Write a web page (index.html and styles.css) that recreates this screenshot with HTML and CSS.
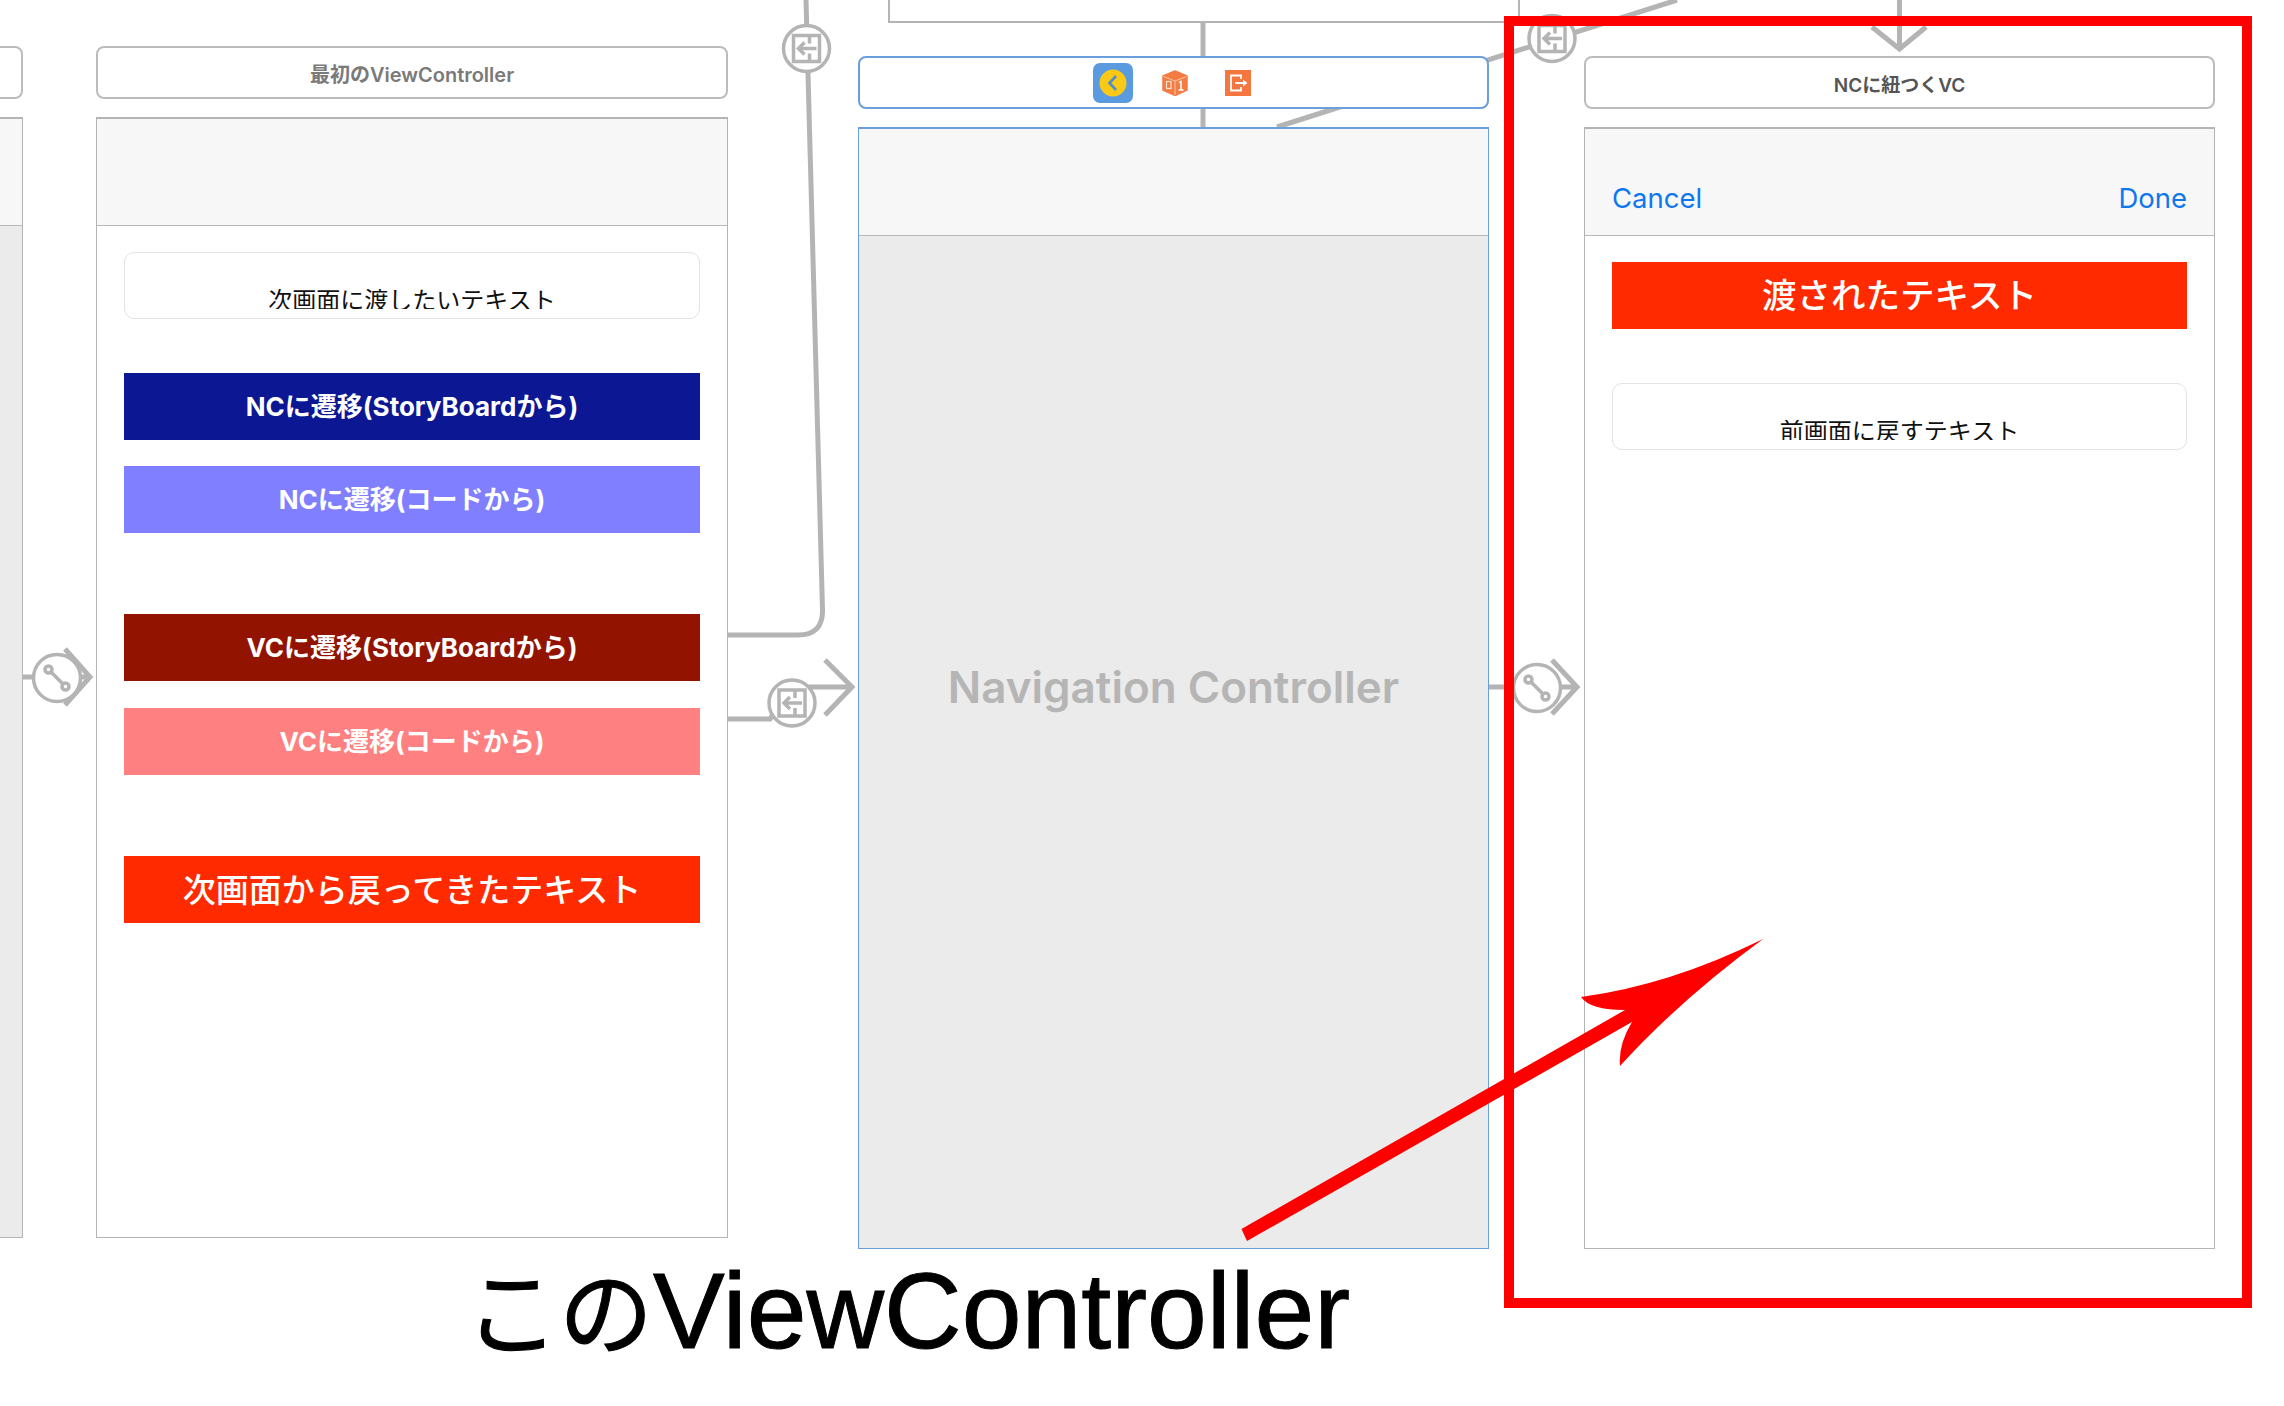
FILE: index.html
```
<!DOCTYPE html>
<html>
<head>
    <meta charset="utf-8">
    <meta name="viewport" content="width=device-width, initial-scale=1">
    <title>storyboard</title>
    <link rel="stylesheet" href="styles.css">
</head>
<body>
    <div class="board">
        <!-- segue lines, they run behind the scenes -->
        <svg class="layer" width="2284" height="1406" viewBox="0 0 2284 1406">
            <g class="wire">
                <path d="M806 0 L822.5 610 Q823 635 798 635 L727 635"/>
                <path d="M727 719 L770 719 L790 687 L851 687"/>
                <path d="M825 660 L852 687 L825 715"/>
                <path d="M23 677 L89 677"/>
                <path d="M65 649 L90 677 L65 705"/>
                <path d="M1203 22 L1203 127"/>
                <path d="M1277 127 L1677 0"/>
                <path d="M1489 687 L1577 687"/>
                <path d="M1552 660 L1577 687 L1552 714"/>
                <path d="M1899.5 0 L1899.5 49"/>
                <path d="M1872 27 L1899.5 49 L1926 27"/>
            </g>
        </svg>

        <div class="top-scene"></div>

        <div class="scene scene-prev">
            <div class="scene-title"></div>
            <div class="scene-body grey-body">
                <div class="navbar"></div>
            </div>
        </div>

        <div class="scene scene-first">
            <div class="scene-title">最初のViewController</div>
            <div class="scene-body">
                <div class="navbar"></div>
                <div class="content">
                    <div class="field"><span class="field-text">次画面に渡したいテキスト</span></div>
                    <div class="btn btn-navy">NCに遷移(StoryBoardから)</div>
                    <div class="btn btn-periwinkle">NCに遷移(コードから)</div>
                    <div class="btn btn-maroon group-gap">VCに遷移(StoryBoardから)</div>
                    <div class="btn btn-salmon">VCに遷移(コードから)</div>
                    <div class="label label-red group-gap">次画面から戻ってきたテキスト</div>
                </div>
            </div>
        </div>

        <div class="scene scene-nav">
            <div class="scene-title title-icons">
                <svg class="dock-icon" width="40" height="40" viewBox="0 0 40 40">
                    <rect width="40" height="40" rx="7" fill="#5a9be0"/>
                    <circle cx="20" cy="20" r="13.5" fill="#f9c915"/>
                    <path d="M23 13 L16.5 20 L23 27" fill="none" stroke="#4f8fc9" stroke-width="2.6"/>
                </svg>
                <svg class="dock-icon cube" width="26" height="26" viewBox="0 0 26 26">
                    <path d="M13 1 L25 6 L25 20 L13 25.5 L1 20 L1 6 Z" fill="#f47b42" stroke="#f47b42" stroke-width="1.5" stroke-linejoin="round"/>
                    <path d="M1.5 6.5 L13 11 L24.5 6.5 M13 11 L13 25" fill="none" stroke="#fbc6a8" stroke-width="1"/>
                    <rect x="4.5" y="11.5" width="4.5" height="7" fill="none" stroke="#fde3d3" stroke-width="1.2"/>
                    <path d="M17 12.5 L19 11.5 L19 20 M16.5 20 L21.5 20" fill="none" stroke="#fff" stroke-width="1.6"/>
                </svg>
                <svg class="dock-icon" width="26" height="26" viewBox="0 0 26 26">
                    <rect width="26" height="26" fill="#f5763f"/>
                    <path d="M16 9 L16 5.5 L6 5.5 L6 20.5 L16 20.5 L16 17" fill="none" stroke="#fff" stroke-width="1.8"/>
                    <path d="M10 13 L19 13" stroke="#fff" stroke-width="2"/>
                    <path d="M18 9.5 L22.5 13 L18 16.5 Z" fill="#fff"/>
                </svg>
            </div>
            <div class="scene-body grey-body">
                <div class="navbar"></div>
                <div class="nav-caption">Navigation Controller</div>
            </div>
        </div>

        <div class="scene scene-child">
            <div class="scene-title title-dark">NCに紐つくVC</div>
            <div class="scene-body">
                <div class="navbar navbar-items">
                    <span class="bar-item">Cancel</span>
                    <span class="bar-item">Done</span>
                </div>
                <div class="content">
                    <div class="label label-red label-big">渡されたテキスト</div>
                    <div class="field field-below"><span class="field-text">前画面に戻すテキスト</span></div>
                </div>
            </div>
        </div>

        <!-- segue badges sit on top of the lines and the scene edges -->
        <svg class="layer" width="2284" height="1406" viewBox="0 0 2284 1406">
            <defs>
                <g id="seg-door">
                    <circle r="23" class="badge"/>
                    <rect x="-13" y="-13" width="26" height="26" class="badge-line"/>
                    <path d="M3 -13 L3 -5 M3 5 L3 13 M10 0 L-8 0 M-2 -6 L-8 0 L-2 6" class="badge-line"/>
                </g>
                <g id="seg-link">
                    <circle r="23.5" class="badge"/>
                    <path d="M-5.5 -5.5 L5.5 5.5" class="badge-line"/>
                    <circle cx="-8.5" cy="-8.5" r="3.5" class="badge-line"/>
                    <circle cx="8.5" cy="8.5" r="3.5" class="badge-line"/>
                </g>
            </defs>
            <use href="#seg-door" x="806.5" y="48.5"/>
            <use href="#seg-door" x="792" y="703"/>
            <use href="#seg-door" x="1552" y="38.5"/>
            <use href="#seg-link" x="57" y="678"/>
            <use href="#seg-link" x="1537" y="688"/>
        </svg>

        <div class="frame"></div>

        <svg class="layer" width="2284" height="1406" viewBox="0 0 2284 1406">
            <path fill="#ff0000" d="M1241.5 1229 L1625 1010 Q1590 1010 1581 997 Q1670 985 1763 939 Q1680 1000 1620 1066 Q1618 1045 1632 1022 L1247 1241 Z"/>
        </svg>

        <div class="caption"><span class="caption-kana">この</span>ViewController</div>
    </div>
</body>
</html>
```
FILE: styles.css
```
*
{
    margin: 0px;
    padding: 0px;
    box-sizing: border-box;
}
body
{
    background-color: white;
    font-family: "Inter", "Noto Sans CJK JP", sans-serif;
}
.board
{
    position: relative;
    width: 2284px;
    height: 1406px;
    overflow: hidden;
}
.layer
{
    position: absolute;
    top: 0px;
    left: 0px;
}
.wire path
{
    fill: none;
    stroke: #b4b4b4;
    stroke-width: 5;
}
.badge
{
    fill: white;
    stroke: #b4b4b4;
    stroke-width: 3.5;
}
.badge-line
{
    fill: none;
    stroke: #b4b4b4;
    stroke-width: 3.5;
}
.top-scene
{
    position: absolute;
    left: 888px;
    top: -10px;
    width: 632px;
    height: 33px;
    background-color: white;
    border: 2px solid #b4b4b4;
}

/* scenes */
.scene
{
    position: absolute;
    display: flex;
    flex-direction: column;
    gap: 18px;
    width: 632px;
}
.scene-prev
{
    left: -609px;
    top: 46px;
    height: 1192px;
}
.scene-first
{
    left: 96px;
    top: 46px;
    height: 1192px;
}
.scene-nav
{
    left: 858px;
    top: 56px;
    width: 631px;
    height: 1193px;
    --edge: #6b9fdb;
}
.scene-child
{
    left: 1584px;
    top: 56px;
    width: 631px;
    height: 1193px;
}
.scene-title
{
    display: flex;
    align-items: center;
    justify-content: center;
    height: 53px;
    flex: none;
    padding-top: 2px;
    background-color: white;
    border: 2px solid var(--edge, #bcbcbc);
    border-radius: 8px;
    color: #7a7a7a;
    font-size: 20px;
    font-weight: 600;
}
.title-dark
{
    color: #555;
    font-size: 19px;
}
.title-icons
{
    padding-top: 0px;
    padding-right: 3px;
}
.dock-icon
{
    display: block;
}
.cube
{
    margin-left: 29px;
    margin-right: 37px;
}
.scene-body
{
    position: relative;
    flex: 1;
    background-color: white;
    border: 1px solid var(--edge, #b4b4b4);
    border-top-width: 2px;
}
.grey-body
{
    background-color: #ebebeb;
}
.navbar
{
    height: 107px;
    background-color: #f7f7f7;
    border-bottom: 1px solid #b9b9b9;
}
.navbar-items
{
    display: flex;
    align-items: flex-end;
    justify-content: space-between;
    padding: 0px 27px 20px 27px;
}
.bar-item
{
    color: #0f77ee;
    font-size: 27.5px;
    line-height: 34px;
}
.nav-caption
{
    position: absolute;
    left: 0px;
    right: 0px;
    top: 532px;
    text-align: center;
    color: #b5b5b5;
    font-size: 44px;
    font-weight: 600;
    line-height: 52px;
}

/* scene content */
.content
{
    display: flex;
    flex-direction: column;
    gap: 26px;
    padding: 26px 27px 0px 27px;
}
.field
{
    height: 67px;
    background-color: white;
    border: 1px solid #e3e3e3;
    border-radius: 10px;
    text-align: center;
    color: #111;
    font-size: 24px;
    padding-top: 36px;
    margin-bottom: 28px;
}
.field-below
{
    margin-top: 28px;
    margin-bottom: 0px;
}
.field-text
{
    display: block;
    height: 20px;
    line-height: 24px;
    overflow: hidden;
}
.btn
{
    display: flex;
    align-items: center;
    justify-content: center;
    height: 67px;
    padding-bottom: 4px;
    color: white;
    font-size: 26px;
    font-weight: 700;
}
.btn-navy
{
    background-color: #0c1793;
}
.btn-periwinkle
{
    background-color: #7f7fff;
}
.btn-maroon
{
    background-color: #921400;
}
.btn-salmon
{
    margin-top: 1px;
    background-color: #ff8080;
}
.group-gap
{
    margin-top: 55px;
}
.label
{
    display: flex;
    align-items: center;
    justify-content: center;
    height: 67px;
    color: white;
    font-size: 33px;
    font-weight: 500;
    padding-bottom: 4px;
}
.label-red
{
    background-color: #ff2a00;
}
.label-big
{
    font-size: 34.5px;
    padding-bottom: 5px;
}

/* annotation */
.frame
{
    position: absolute;
    left: 1504px;
    top: 16px;
    width: 748px;
    height: 1292px;
    border: 10px solid #ff0000;
}
.caption
{
    position: absolute;
    left: 465px;
    top: 1247px;
    color: black;
    font-family: "Liberation Sans", sans-serif;
    font-size: 107.5px;
    line-height: 120px;
    white-space: nowrap;
    -webkit-text-stroke: 1px black;
}
.caption-kana
{
    font-family: "Noto Sans CJK JP", sans-serif;
    font-size: 94px;
}
```
